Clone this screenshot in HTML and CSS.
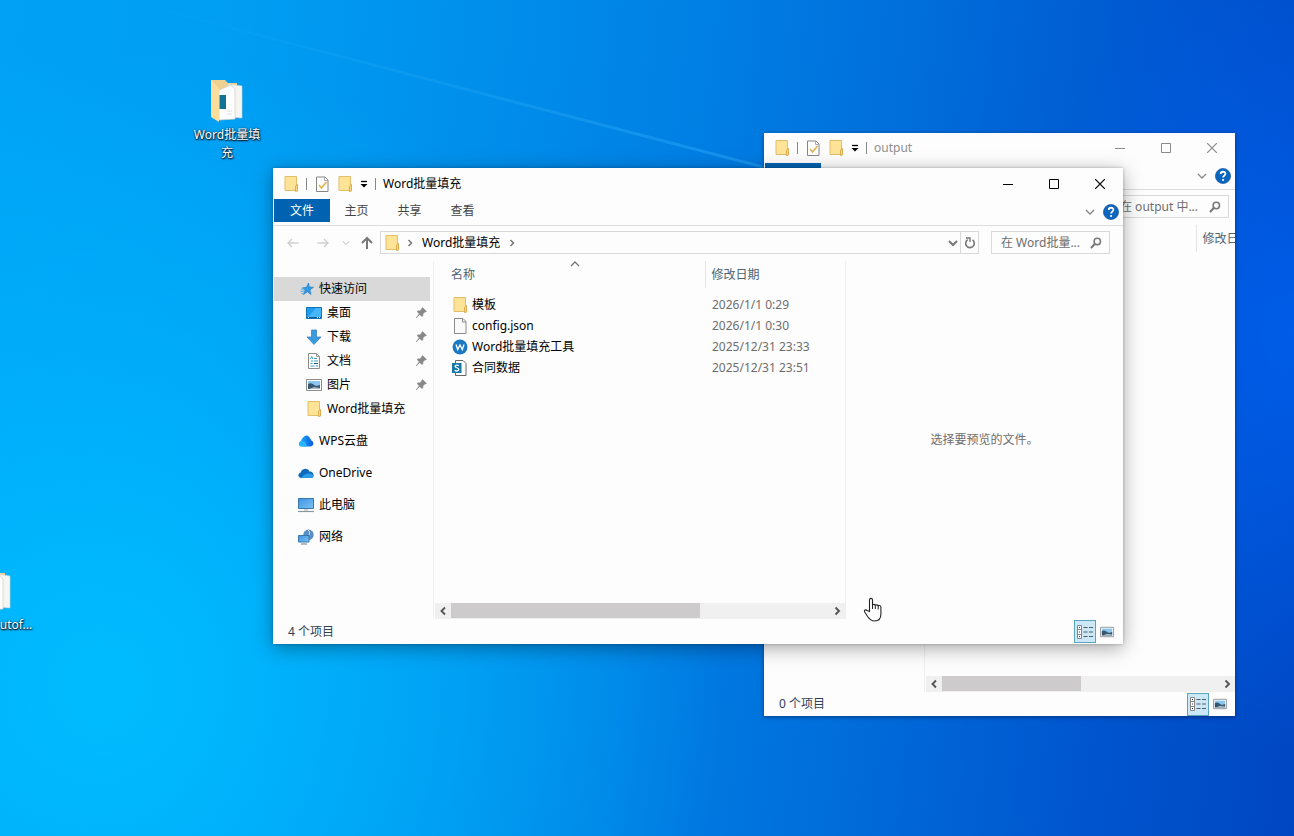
FILE: index.html
```html
<!DOCTYPE html>
<html lang="zh-CN">
<head>
<meta charset="utf-8">
<title>Word批量填充</title>
<link rel="stylesheet" href="styles.css">
</head>
<body>
<svg class="sprite" aria-hidden="true">
  <defs>
    <linearGradient id="gScreen" x1="0" y1="0" x2="1" y2="1"><stop offset="0" stop-color="#3f93e0"/><stop offset="1" stop-color="#7cc3f5"/></linearGradient>
    <linearGradient id="gCloud" x1="0" y1="0" x2="1" y2="0"><stop offset="0" stop-color="#1fb0f8"/><stop offset="1" stop-color="#0a5be0"/></linearGradient>
    <symbol id="folder" viewBox="0 0 16 18"><path d="M2 1.500h11.500v14H2z" fill="#ffe397" stroke="#e3bd68"/><path d="M12.500 16.500v-5.500l2-1.500v6.500z" fill="#fbd98a" stroke="#dcae50"/></symbol>
    <symbol id="page" viewBox="0 0 16 18"><path d="M2.500 1.500h8.500l3 3v12H2.500z" fill="#f9f9f9" stroke="#8b8b8b"/><path d="M10.500 1.500v3.500H14" fill="none" stroke="#8b8b8b"/></symbol>
    <symbol id="check" viewBox="0 0 16 18"><path d="M2.500 2h8.500l3 3v11.500H2.500z" fill="#fff" stroke="#858585"/><path d="M10.500 2v3.500H14" fill="none" stroke="#aaa"/><path d="M5 10l2.500 3 5-6" fill="none" stroke="#e2b04e" stroke-width="1.600"/></symbol>
    <symbol id="qat" viewBox="0 0 8 10"><path d="M1 2.500h6" stroke="#000" stroke-width="1.300"/><path d="M0.500 5h7L4 8.500z"/></symbol>
    <symbol id="min" viewBox="0 0 10 10"><path d="M0 5.500h10" fill="none" stroke="currentColor"/></symbol>
    <symbol id="max" viewBox="0 0 10 10"><path d="M.5.500h9v9h-9z" fill="none" stroke="currentColor"/></symbol>
    <symbol id="close" viewBox="0 0 10 10"><path d="M0 0l10 10M10 0L0 10" fill="none" stroke="currentColor" stroke-width="1.200"/></symbol>
    <symbol id="down" viewBox="0 0 10 10"><path d="M1 3l4 4 4-4" fill="none" stroke="currentColor" stroke-width="1.300"/></symbol>
    <symbol id="drop" viewBox="0 0 10 10"><path d="M1 3l4 4 4-4" fill="none" stroke="currentColor" stroke-width="2"/></symbol>
    <symbol id="right" viewBox="0 0 10 10"><path d="M3.500 1.500L7 5 3.500 8.500" fill="none" stroke="currentColor" stroke-width="1.900"/></symbol>
    <symbol id="crumb" viewBox="0 0 10 10"><path d="M3.500 2L6.500 5l-3 3" fill="none" stroke="currentColor" stroke-width="1.500"/></symbol>
    <symbol id="left" viewBox="0 0 10 10"><path d="M7 1.500L3.500 5 7 8.500" fill="none" stroke="currentColor" stroke-width="1.900"/></symbol>
    <symbol id="arrow" viewBox="0 0 14 14"><path d="M12.500 7H2M6 3L2 7l4 4" fill="none" stroke="currentColor" stroke-width="1.400"/></symbol>
    <symbol id="up" viewBox="0 0 14 14"><path d="M7 13V2M2 7l5-5 5 5" fill="none" stroke="currentColor" stroke-width="2"/></symbol>
    <symbol id="refresh" viewBox="0 0 12 12"><path d="M8.500 2.800A4.300 4.300 0 1 1 3.800 2.600" fill="none" stroke="currentColor" stroke-width="1.600"/><path d="M2 1h4v4" fill="none" stroke="currentColor" stroke-width="1.400"/></symbol>
    <symbol id="search" viewBox="0 0 12 12"><circle cx="7.300" cy="4.500" r="3.200" fill="none" stroke="currentColor" stroke-width="1.500"/><path d="M5 6.800L1 11" stroke="currentColor" stroke-width="2"/></symbol>
    <symbol id="help" viewBox="0 0 16 16"><circle cx="8" cy="8" r="7.600" fill="#0c66bd" stroke="#0a4f9c" stroke-width=".6"/><path d="M5.700 6.100c0-3.200 4.700-3 4.700-.3 0 1.800-2.300 1.800-2.300 3.800" fill="none" stroke="#fff" stroke-width="1.800"/><circle cx="8.100" cy="12" r="1.100" fill="#fff"/></symbol>
    <symbol id="star" viewBox="0 0 16 16"><path d="M9.500 2l.8 4 4.200.3-3.500 2.400 1 4.800-3.700-2.700-3.800 2.700L6 9.300 3.500 6.800l4-.5z" fill="#2f9be6" stroke="#1d76bd" stroke-width=".6"/><path d="M2 8h3M1.500 10.200h3.500M2.500 12.500h2" stroke="#4aa9ea" stroke-width="1"/></symbol>
    <symbol id="desk" viewBox="0 0 16 16"><path d="M.5 2.500h15v11H.5z" fill="#1d9cf0" stroke="#1272b8"/><path d="M1 13L10 3h5v10z" fill="#46b5fa"/><path d="M1 12.500h14" stroke="#0c5c9c"/><path d="M2 12.500h1M11 12.500h1M13 12.500h1" stroke="#fff"/></symbol>
    <symbol id="dload" viewBox="0 0 16 16"><path d="M5.500 1h5v7H15l-7 7.500L1 8h4.500z" fill="#3c9bdc" stroke="#2b7dbb" stroke-width=".7"/></symbol>
    <symbol id="doc" viewBox="0 0 16 16"><path d="M2.500.5h8l3 3v12h-11z" fill="#fff" stroke="#8b8b8b"/><path d="M10.500.5v3h3" fill="none" stroke="#999"/><path d="M4.500 6l1.200-2.500L7 6M8 5.500h3M5 8h2M8 8h4M4.500 10.500h2M8 10.500h4M4.500 13h4M9.500 13H12" fill="none" stroke="#3a9cc4"/><path d="M8 10.500h4" stroke="#175a80"/></symbol>
    <symbol id="pic" viewBox="0 0 16 14"><path d="M.5 1.500h15v11H.5z" fill="#fff" stroke="#8b8b8b"/><path d="M2 3h12v8H2z" fill="#8dc6ec"/><path d="M2 6c3-2 5 .5 7 1.500s3 0 5-.500v4H2z" fill="#35566e"/><path d="M3 11l5-2 6 1v1z" fill="#a9b9c2"/></symbol>
    <symbol id="wps" viewBox="0 0 16 14"><path d="M4 12.500C.2 12.500 0 8.500 2.700 7.300 4 4 6.300 1.500 8.300 1.500c2.500 0 3.700 2.600 5 5 3.200 1.500 2.700 6-1.300 6z" fill="url(#gCloud)"/><path d="M2.700 7.300C6 6 8.500 9 9 12.500H4C.2 12.500 0 8.500 2.700 7.300z" fill="#28b4fa"/></symbol>
    <symbol id="onedrive" viewBox="0 0 16 14"><path d="M3.500 12C-.3 12-.7 7.500 2.700 6.500 4 1.800 10 1.500 11.500 5.500c5-.300 5.500 6.500 1.500 6.500z" fill="#0f6cbd"/><path d="M3 12c2-3 6-5 8.500-4.500 4 0 5.500 4.500 1.500 4.500z" fill="#2b9be8"/></symbol>
    <symbol id="pc" viewBox="0 0 16 16"><path d="M.5 1.500h15v10H.5z" fill="url(#gScreen)" stroke="#3777ad"/><path d="M6 12h4v2H6z" fill="#cfd6da"/><path d="M0 14.500h16" stroke="#8a969e" stroke-width="1.200"/></symbol>
    <symbol id="net" viewBox="0 0 16 16"><circle cx="10.500" cy="5.700" r="5.200" fill="#5a8ec6"/><path d="M10 1c2 1 2 4 1 5" stroke="#cfe3f5" fill="none"/><path d="M.5 6.500h10.500v6.500H.5z" fill="url(#gScreen)" stroke="#3777ad"/><path d="M3 15h6" stroke="#7992a5" stroke-width="1.200"/></symbol>
    <symbol id="pin" viewBox="0 0 12 12"><path d="M7.500.5l4 4-1.200.6-.5-.1-2 2c.3 1.300.1 2-.6 2.700L4.800 7.400 1 11l3.200-4.300-2.200-2.100c.8-.8 1.600-.9 2.700-.6l2-2-.1-.6z" fill="#878787" stroke="#878787" stroke-width=".5"/></symbol>
    <symbol id="wapp" viewBox="0 0 16 16"><circle cx="8" cy="8" r="7.500" fill="#1b78c2"/><path d="M4 5.500l1.700 5L8 6l2.300 4.500 1.700-5" fill="none" stroke="#fff" stroke-width="1.300"/></symbol>
    <symbol id="sheet" viewBox="0 0 16 16"><path d="M3.500.5h7.500l3 3v12H3.500z" fill="#fff" stroke="#666"/><path d="M0 3h9.500v10H0z" fill="#1678a5"/><path d="M6.800 5.700C5.300 4.700 3.100 5 3.100 6.500S6.800 7.500 6.800 9.300 4.100 11.500 2.700 10.300" fill="none" stroke="#fff" stroke-width="1.300"/></symbol>
    <symbol id="details" viewBox="0 0 18 14"><path d="M1.500.5h4v13h-4zM1.500 4.500h4M1.500 9.500h4" fill="#fff" stroke="#858585"/><path d="M3 2.500h1M3 7h1M3 11.500h1" stroke="#333"/><path d="M7.500 2.500h4M13 2.500h4M7.500 7h4M13 7h4M7.500 11.500h4M13 11.500h4" stroke="#4d5c66"/></symbol>
    <symbol id="full" viewBox="0 0 34 46"><path d="M1 2h14l3 3h9v30H1z" fill="#eed092"/><path d="M18 6l14 2v32l-14-1z" fill="#f5f5f2" stroke="#d5d2c9" stroke-width=".6"/><path d="M9 12l12-5 4 4v30l-16 1z" fill="#fff" stroke="#cfccc2" stroke-width=".7"/><path d="M9.500 17h6.500v14H9.500z" fill="#127294"/><path d="M17 33h5M17 36h5" stroke="#ddd"/><path d="M1 2l8 8v34L1 39z" fill="#fbdd9d"/></symbol>
  </defs>
</svg>

<main class="desktop">
  <svg class="wallpaper" viewBox="0 0 1294 836" preserveAspectRatio="none" aria-hidden="true">
    <defs>
      <linearGradient id="ray" x1="0" y1="0" x2="1" y2="0"><stop offset="0" stop-color="#39b5ff" stop-opacity="0"/><stop offset="1" stop-color="#39b5ff" stop-opacity=".4"/></linearGradient>
    </defs>
    <path d="M130 0L765 166v3L120 0z" fill="url(#ray)"/>
  </svg>

  <a class="shortcut shortcut-word" href="#word"><svg class="shortcut-icon"><use href="#full"/></svg><span>Word批量填充</span></a>
  <a class="shortcut shortcut-edge" href="#auto"><svg class="shortcut-icon"><use href="#full"/></svg><span>utof...</span></a>

  <section class="window window-back" aria-label="output">
    <header class="titlebar">
      <svg class="icon"><use href="#folder"/></svg><i class="rule"></i>
      <svg class="icon"><use href="#check"/></svg><svg class="icon"><use href="#folder"/></svg>
      <svg class="qat"><use href="#qat"/></svg><i class="rule"></i>
      <h1 class="title">output</h1>
      <div class="controls">
        <button aria-label="最小化"><svg><use href="#min"/></svg></button><button aria-label="最大化"><svg><use href="#max"/></svg></button><button aria-label="关闭"><svg><use href="#close"/></svg></button>
      </div>
    </header>
    <div class="ribbon">
      <button class="tab tab-file" aria-label="文件"></button>
      <div class="ribbon-end"><button aria-label="展开功能区"><svg class="small"><use href="#down"/></svg></button><button aria-label="帮助"><svg class="help"><use href="#help"/></svg></button></div>
    </div>
    <div class="navbar">
      <div class="address"></div>
      <label class="search"><input type="text" aria-label="搜索" placeholder="在 output 中..."><svg class="mini"><use href="#search"/></svg></label>
    </div>
    <div class="body">
      <div class="sidebar"></div>
      <div class="files">
        <table class="list"><thead><tr><th class="col-name"></th><th>修改日期</th></tr></thead></table>
        <div class="scrollbar"><button aria-label="向左"><svg class="small"><use href="#left"/></svg></button><div class="track"><div class="thumb thumb-half"></div></div><button aria-label="向右"><svg class="small"><use href="#right"/></svg></button></div>
      </div>
    </div>
    <footer class="status"><span>0 个项目</span>
      <div class="views"><button class="view view-on" aria-label="详细信息"><svg class="details"><use href="#details"/></svg></button><button class="view" aria-label="大图标"><svg class="thumbs"><use href="#pic"/></svg></button></div>
    </footer>
  </section>

  <section class="window window-front" aria-label="Word批量填充">
    <header class="titlebar">
      <svg class="icon"><use href="#folder"/></svg><i class="rule"></i>
      <svg class="icon"><use href="#check"/></svg><svg class="icon"><use href="#folder"/></svg>
      <svg class="qat"><use href="#qat"/></svg><i class="rule"></i>
      <h1 class="title">Word批量填充</h1>
      <div class="controls">
        <button aria-label="最小化"><svg><use href="#min"/></svg></button><button aria-label="最大化"><svg><use href="#max"/></svg></button><button aria-label="关闭"><svg><use href="#close"/></svg></button>
      </div>
    </header>
    <div class="ribbon">
      <button class="tab tab-file">文件</button><button class="tab">主页</button><button class="tab">共享</button><button class="tab">查看</button>
      <div class="ribbon-end"><button aria-label="展开功能区"><svg class="small"><use href="#down"/></svg></button><button aria-label="帮助"><svg class="help"><use href="#help"/></svg></button></div>
    </div>
    <div class="navbar">
      <button class="step" aria-label="后退"><svg class="nav-icon"><use href="#arrow"/></svg></button>
      <button class="step" aria-label="前进"><svg class="nav-icon flip"><use href="#arrow"/></svg></button>
      <button class="recent" aria-label="最近位置"><svg class="tiny"><use href="#down"/></svg></button>
      <button class="parent" aria-label="向上"><svg class="nav-icon"><use href="#up"/></svg></button>
      <div class="address">
        <svg class="icon"><use href="#folder"/></svg><svg class="small"><use href="#crumb"/></svg>
        <a href="#word">Word批量填充</a><svg class="small"><use href="#crumb"/></svg>
        <button class="drop" aria-label="历史"><svg class="small"><use href="#drop"/></svg></button>
        <button class="reload" aria-label="刷新"><svg class="mini"><use href="#refresh"/></svg></button>
      </div>
      <label class="search"><input type="text" aria-label="搜索" placeholder="在 Word批量..."><svg class="mini"><use href="#search"/></svg></label>
    </div>
    <div class="body">
      <nav class="sidebar">
        <a class="place place-on" href="#quick"><svg><use href="#star"/></svg>快速访问</a>
        <a class="place sub" href="#desktop"><svg><use href="#desk"/></svg>桌面<svg class="pin"><use href="#pin"/></svg></a>
        <a class="place sub" href="#downloads"><svg><use href="#dload"/></svg>下载<svg class="pin"><use href="#pin"/></svg></a>
        <a class="place sub" href="#documents"><svg><use href="#doc"/></svg>文档<svg class="pin"><use href="#pin"/></svg></a>
        <a class="place sub" href="#pictures"><svg><use href="#pic"/></svg>图片<svg class="pin"><use href="#pin"/></svg></a>
        <a class="place sub" href="#word"><svg class="tall"><use href="#folder"/></svg>Word批量填充</a>
        <a class="place root" href="#wpscloud"><svg><use href="#wps"/></svg>WPS云盘</a>
        <a class="place root" href="#one"><svg><use href="#onedrive"/></svg>OneDrive</a>
        <a class="place root" href="#thispc"><svg><use href="#pc"/></svg>此电脑</a>
        <a class="place root" href="#network"><svg><use href="#net"/></svg>网络</a>
      </nav>
      <div class="files">
        <table class="list">
          <thead><tr><th class="col-name">名称<svg class="sort"><use href="#down"/></svg></th><th>修改日期</th></tr></thead>
          <tbody>
            <tr><td><a href="#t"><svg class="tall"><use href="#folder"/></svg>模板</a></td><td>2026/1/1 0:29</td></tr>
            <tr><td><a href="#c"><svg class="tall"><use href="#page"/></svg>config.json</a></td><td>2026/1/1 0:30</td></tr>
            <tr><td><a href="#w"><svg><use href="#wapp"/></svg>Word批量填充工具</a></td><td>2025/12/31 23:33</td></tr>
            <tr><td><a href="#d"><svg><use href="#sheet"/></svg>合同数据</a></td><td>2025/12/31 23:51</td></tr>
          </tbody>
        </table>
        <div class="scrollbar"><button aria-label="向左"><svg class="small"><use href="#left"/></svg></button><div class="track"><div class="thumb"></div></div><button aria-label="向右"><svg class="small"><use href="#right"/></svg></button></div>
      </div>
      <aside class="preview">选择要预览的文件。</aside>
    </div>
    <footer class="status"><span>4 个项目</span>
      <div class="views"><button class="view view-on" aria-label="详细信息"><svg class="details"><use href="#details"/></svg></button><button class="view" aria-label="大图标"><svg class="thumbs"><use href="#pic"/></svg></button></div>
    </footer>
  </section>

  <svg class="pointer" viewBox="0 0 20 26" aria-hidden="true"><path d="M6.500 14.500V3c0-2.200 3-2.200 3 0v5.500c0-1.500 2.800-1.500 2.800.3 0-1.400 2.900-1.200 2.900.5 0-1.300 2.700-1.100 2.700.7v7c0 4.500-2.500 7-6.300 7-3.600 0-5.100-1.700-7-4.500L1.700 15c-1-1.800 1-2.800 2.300-1.500z" fill="#fff" stroke="#222" stroke-width="1.100"/><path d="M9.500 8v4M12.300 8.500V12M15.200 9v3.500" stroke="#222" fill="none"/></svg>
</main>
</body>
</html>
```
FILE: styles.css
```css
* { box-sizing: border-box; }
body { margin: 0; font: 12px/16px "Noto Sans", "Noto Sans CJK SC", sans-serif; color: #000; }
button { display: flex; align-items: center; justify-content: center; padding: 0; border: 0; background: none; font: inherit; color: inherit; }
a { color: inherit; text-decoration: none; }
svg { flex: none; display: block; }
.sprite { position: absolute; width: 0; height: 0; }

.desktop {
  position: relative; height: 100vh; overflow: hidden;
  background:
    radial-gradient(ellipse 260px 420px at 100% 40%, rgba(0, 104, 255, .6), rgba(0, 104, 255, 0)),
    radial-gradient(ellipse 620px 640px at 8% 82%, rgba(0, 190, 255, .95), rgba(0, 184, 255, .6) 45%, rgba(0, 170, 255, 0)),
    linear-gradient(97deg, #00a2f6 0%, #009df3 18%, #0090ec 34%, #0080e4 50%, #006edb 66%, #0056cf 84%, #0046c2 100%);
}
.wallpaper { width: 100%; height: 100%; }

.shortcut { position: absolute; display: flex; flex-direction: column; align-items: center; width: 76px; text-align: center; line-height: 18px; color: #fff; text-shadow: 1px 1px 2px #00243f, 0 0 2px #00243f, 0 1px 1px #00243f; }
.shortcut-icon { width: 34px; height: 46px; margin-bottom: 2px; }
.shortcut-word { left: 189px; top: 78px; }
.shortcut-edge { left: -22px; top: 568px; }
.shortcut-edge .shortcut-icon { margin-right: 42px; }

.window { position: absolute; display: flex; flex-direction: column; background: #fdfdfd; }
.window-back { left: 764px; top: 133px; width: 471px; height: 583px; box-shadow: 0 1px 4px rgba(0, 20, 60, .55); }
.window-front { left: 273px; top: 168px; width: 850px; height: 476px; box-shadow: 0 4px 18px rgba(0, 0, 0, .35), 0 0 3px rgba(0, 0, 0, .25); }

.titlebar { display: flex; align-items: center; gap: 7px; height: 31px; padding-left: 10px; }
.window-back .titlebar { height: 30px; }
.icon { width: 16px; height: 18px; }
.qat { width: 8px; height: 10px; }
.rule { width: 1px; height: 12px; background: #888; }
.title { margin: 0; font-size: 12px; font-weight: 400; }
.window-back .title { color: #8f8f8f; }
.controls { display: flex; margin-left: auto; }
.controls button { width: 46px; height: 30px; }
.controls svg { width: 10px; height: 10px; }
.window-back .controls { color: #8a8a8a; }

.ribbon { display: flex; height: 27px; padding-left: 1px; border-bottom: 1px solid #dcdcdc; }
.tab { width: 53px; height: 23px; color: #444; }
.tab-file { width: 56px; background: #0063b1; color: #fff; }
.ribbon-end { display: flex; align-items: center; gap: 8px; margin-left: auto; padding-right: 4px; color: #888; }
.help { width: 16px; height: 16px; }
.small { width: 10px; height: 10px; }
.tiny { width: 8px; height: 8px; }
.mini { width: 12px; height: 12px; }

.navbar { display: flex; height: 35px; padding: 5px 13px 7px 5px; color: #777; }
.window-back .navbar { padding-right: 6px; }
.step { width: 30px; color: #cfcfcf; }
.nav-icon { width: 14px; height: 14px; }
.flip { transform: scaleX(-1); }
.recent { width: 16px; color: #ccc; }
.parent { width: 26px; }
.address { display: flex; flex: 1; align-items: center; gap: 5px; padding-left: 3px; border: 1px solid #d9d9d9; }
.address a { padding: 0 2px; color: #000; }
.drop { width: 14px; margin-left: auto; margin-right: -5px; }
.reload { align-self: stretch; width: 18px; border-left: 1px solid #d9d9d9; }
.search { display: flex; align-items: center; width: 119px; margin-left: 12px; padding: 0 7px 0 9px; border: 1px solid #d9d9d9; }
.search input { flex: 1; min-width: 0; padding: 0; border: 0; outline: 0; background: none; font: inherit; }
.search input::placeholder { color: #6d6d6d; opacity: 1; }

.body { display: flex; flex: 1; min-height: 0; }
.sidebar { flex: none; width: 161px; padding: 16px 3px 0 1px; border-right: 1px solid #f0f0f0; }
.place { display: flex; align-items: center; gap: 4px; height: 24px; padding: 0 3px 0 25px; }
.place svg { width: 16px; height: 16px; }
.place-on { background: #d9d9d9; }
.sub { padding-left: 32px; gap: 5px; }
.root { margin-top: 8px; padding-left: 24px; gap: 5px; }
.place .pin { width: 12px; height: 12px; margin-left: auto; }

.files { display: flex; flex: 1; flex-direction: column; min-width: 0; overflow: hidden; }
.list { width: 412px; table-layout: fixed; border-collapse: collapse; white-space: nowrap; }
.list th { height: 27px; padding: 0 0 0 6px; border-left: 1px solid #e4e4e4; text-align: left; font-weight: 400; color: #4c6474; }
.list .col-name { position: relative; width: 271px; padding-left: 17px; border: 0; }
.list thead::after { content: ""; display: block; height: 6px; }
.sort { position: absolute; left: 136px; top: -2px; width: 10px; height: 10px; transform: scaleY(-1); color: #777; }
.list td { height: 21px; padding: 0 0 0 7px; color: #6d6d6d; }
.list td:first-child { padding-left: 18px; }
.list td a { display: flex; align-items: center; gap: 4px; color: #000; }
.list td svg { width: 16px; height: 16px; }
.list td .tall, .place .tall { height: 18px; }
.scrollbar { display: flex; height: 16px; margin: auto 0 0 1px; background: #f0f0f0; color: #555; }
.scrollbar button { width: 16px; }
.track { flex: 1; }
.thumb { width: 66%; height: 15px; background: #cdcbcc; }
.thumb-half { width: 50%; }
.preview { display: flex; flex: none; align-items: center; justify-content: center; width: 278px; border-left: 1px solid #f0f0f0; color: #6d6d6d; }

.status { display: flex; align-items: center; height: 25px; padding: 0 5px 0 15px; color: #2e4257; }
.window-back .status { height: 24px; padding-right: 4px; }
.views { display: flex; margin-left: auto; }
.view { width: 22px; height: 23px; }
.view-on { border: 1px solid #5aa5bd; background: #cce8f6; }
.details { width: 18px; height: 14px; }
.thumbs { width: 14px; height: 12px; }

.pointer { position: absolute; left: 863px; top: 597px; width: 20px; height: 26px; }
```
